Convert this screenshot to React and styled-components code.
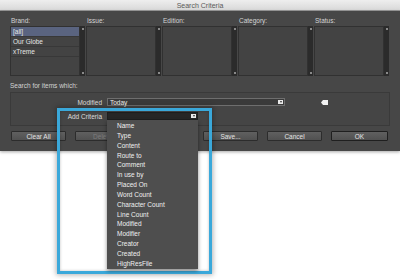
import React from "react";
import styled, { createGlobalStyle } from "styled-components";

const Global = createGlobalStyle`
  html, body { margin: 0; padding: 0; background: #ffffff; }
  * { box-sizing: border-box; }
`;

const Page = styled.div`
  position: relative;
  width: 400px;
  height: 279px;
  overflow: hidden;
  background: #ffffff;
  font-family: "Liberation Sans", Arial, sans-serif;
  font-size: 6.5px;
`;

const TitleBar = styled.div`
  height: 11px;
  display: flex;
  align-items: center;
  justify-content: center;
  background: linear-gradient(#eeeeee, #d9d9d9);
  border-bottom: 1px solid #9c9c9c;
  color: #5a5a5a;
  font-size: 7px;
`;

const Dialog = styled.div`
  position: relative;
  height: 140px;
  padding: 5px 10px 0;
  background: #474747;
  box-shadow: 0 1px 3px rgba(0, 0, 0, 0.35);
`;

const Columns = styled.div`
  display: grid;
  grid-template-columns: repeat(5, 76px);
`;

const Column = styled.div`
  display: flex;
  flex-direction: column;
`;

const Label = styled.div`
  height: 10px;
  line-height: 10px;
  color: #d4d4d4;
  padding-left: 1px;
`;

const ListWrap = styled.div`
  display: flex;
  height: 50px;
  width: 75px;
`;

const List = styled.div`
  width: 70px;
  height: 100%;
  background: #434343;
  border: 1px solid #313131;
`;

const Row = styled.div`
  height: 10px;
  line-height: 9px;
  padding-left: 2px;
  color: #e6e6e6;
  border-bottom: 1px solid #383838;
  background: ${(p) => (p.$selected ? "#5a6480" : "transparent")};
`;

const Scroll = styled.div`
  width: 5px;
  height: 100%;
  background: #2b2b2b;
  display: flex;
  flex-direction: column;
  justify-content: space-between;
  align-items: center;
  padding: 2px 0;
`;

const ScrollArrow = styled.div`
  width: 2px;
  height: 2px;
  background: #8a8a8a;
`;

const SectionLabel = styled.div`
  margin-top: 5px;
  height: 10px;
  line-height: 10px;
  color: #d4d4d4;
`;

const CriteriaBox = styled.div`
  margin-top: 1px;
  height: 34px;
  border: 1px solid #3a3a3a;
  background: #454545;
  padding-top: 5px;
  display: flex;
  flex-direction: column;
  gap: 6px;
`;

const CriteriaRow = styled.div`
  display: flex;
  align-items: center;
  height: 8px;
`;

const RowLabel = styled.div`
  width: 91px;
  text-align: right;
  color: #dcdcdc;
  margin-right: 5px;
`;

const SelectWrap = styled.div`
  position: relative;
  width: ${(p) => p.$width}px;
  height: 8px;
`;

const Select = styled.div`
  height: 100%;
  display: flex;
  align-items: center;
  justify-content: space-between;
  padding: 0 1px 0 2px;
  color: #f0f0f0;
  background: ${(p) => (p.$focused ? "#262626" : "#3a3a3a")};
  border: 1px solid ${(p) => (p.$focused ? "#1f1f1f" : "#6e6e6e")};
`;

const SelArrow = styled.div`
  width: 5px;
  height: 4px;
  background: #e8e8e8;
  display: flex;
  align-items: center;
  justify-content: center;
  &::after {
    content: "";
    border-left: 1.5px solid transparent;
    border-right: 1.5px solid transparent;
    border-top: 2px solid #333;
  }
`;

const RemoveIcon = styled.svg`
  margin-left: 36px;
  display: block;
`;

const Menu = styled.div`
  position: absolute;
  top: 100%;
  left: 0;
  width: 100%;
  z-index: 5;
  background: #4e4e4e;
  padding: 1px 0 0;
  box-shadow: 0 2px 4px rgba(0, 0, 0, 0.45);
`;

const MenuItem = styled.div`
  height: 9.85px;
  line-height: 9.85px;
  padding-left: 10px;
  color: #f0f0f0;
  white-space: nowrap;
`;

const Buttons = styled.div`
  margin-top: 5px;
  display: flex;
  justify-content: space-between;
  padding: 0 2px 0 1px;
`;

const Group = styled.div`
  display: flex;
  gap: 9px;
`;

const Button = styled.div`
  width: ${(p) => (p.$default ? 57 : 55)}px;
  height: 10px;
  display: flex;
  align-items: center;
  justify-content: center;
  border-radius: 1px;
  border: ${(p) => (p.$default ? "1.5px solid #1f1f1f" : "1px solid #2c2c2c")};
  background: linear-gradient(#606060, #515151);
  color: ${(p) => (p.$disabled ? "#7c7c7c" : "#e4e4e4")};
`;

const Highlight = styled.div`
  position: absolute;
  left: 57px;
  top: 108px;
  width: 155px;
  height: 166px;
  border: 3px solid #3aa8da;
  box-shadow: 0 0 5px 1px rgba(0, 0, 0, 0.3), inset 0 0 3px rgba(0, 0, 0, 0.25);
  z-index: 4;
  pointer-events: none;
`;

const columns = [
  { label: "Brand:", rows: ["[all]", "Our Globe", "xTreme"] },
  { label: "Issue:", rows: [] },
  { label: "Edition:", rows: [] },
  { label: "Category:", rows: [] },
  { label: "Status:", rows: [] },
];

const menuItems = [
  "Name",
  "Type",
  "Content",
  "Route to",
  "Comment",
  "In use by",
  "Placed On",
  "Word Count",
  "Character Count",
  "Line Count",
  "Modified",
  "Modifier",
  "Creator",
  "Created",
  "HighResFile",
];

export default function App() {
  return (
    <Page>
      <Global />
      <TitleBar>Search Criteria</TitleBar>
      <Dialog>
        <Columns>
          {columns.map((c) => (
            <Column key={c.label}>
              <Label>{c.label}</Label>
              <ListWrap>
                <List>
                  {c.rows.map((r, i) => (
                    <Row key={r} $selected={i === 0}>
                      {r}
                    </Row>
                  ))}
                </List>
                <Scroll>
                  <ScrollArrow />
                  <ScrollArrow />
                </Scroll>
              </ListWrap>
            </Column>
          ))}
        </Columns>
        <SectionLabel>Search for items which:</SectionLabel>
        <CriteriaBox>
          <CriteriaRow>
            <RowLabel>Modified</RowLabel>
            <SelectWrap $width={178}>
              <Select>
                <span>Today</span>
                <SelArrow />
              </Select>
            </SelectWrap>
            <RemoveIcon width="7" height="5" viewBox="0 0 7 5">
              <polygon points="0,2.5 2,0 7,0 7,5 2,5" fill="#f2f2f2" />
            </RemoveIcon>
          </CriteriaRow>
          <CriteriaRow>
            <RowLabel>Add Criteria</RowLabel>
            <SelectWrap $width={91}>
              <Select $focused>
                <span />
                <SelArrow />
              </Select>
              <Menu>
                {menuItems.map((m) => (
                  <MenuItem key={m}>{m}</MenuItem>
                ))}
              </Menu>
            </SelectWrap>
          </CriteriaRow>
        </CriteriaBox>
        <Buttons>
          <Group>
            <Button>Clear All</Button>
            <Button $disabled>Delete</Button>
          </Group>
          <Group>
            <Button>Save...</Button>
            <Button>Cancel</Button>
            <Button $default>OK</Button>
          </Group>
        </Buttons>
      </Dialog>
      <Highlight />
    </Page>
  );
}
